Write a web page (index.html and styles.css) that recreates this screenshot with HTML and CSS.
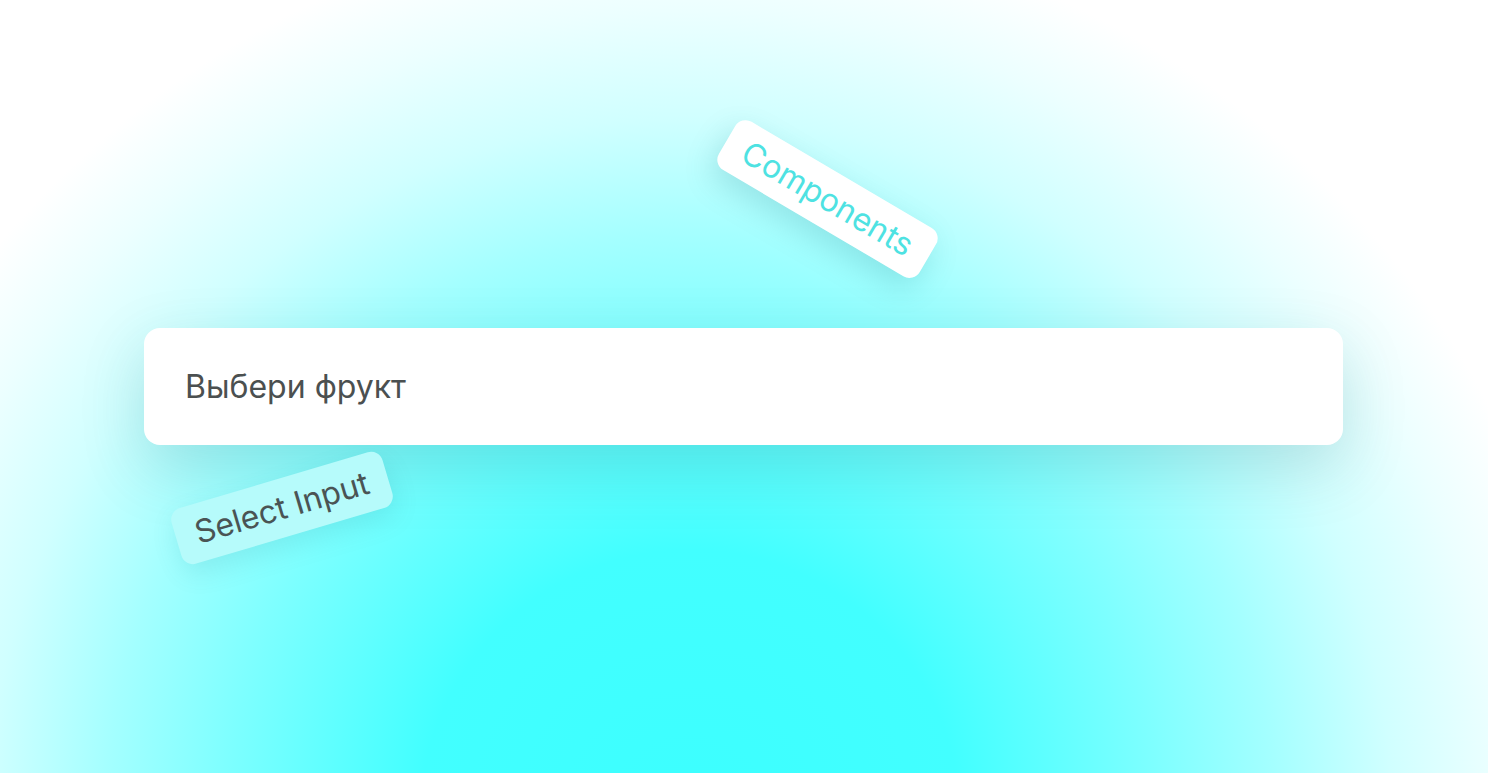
FILE: index.html
```html
<!DOCTYPE html>
<html lang="ru">
<head>
<meta charset="utf-8">
<title>Select Input</title>
<link rel="stylesheet" href="styles.css">
</head>
<body>
<main class="stage">
  <div class="select-field">
    <span class="select-placeholder">Выбери фрукт</span>
  </div>
  <span class="tag tag-components">Components</span>
  <span class="tag tag-select">Select Input</span>
</main>
</body>
</html>
```

FILE: styles.css
```css
html, body {
  margin: 0;
  padding: 0;
  width: 1488px;
  height: 773px;
  overflow: hidden;
}
body {
  font-family: "Inter", "Noto Sans", sans-serif;
  background: #ffffff;
}
.stage {
  position: relative;
  width: 1488px;
  height: 773px;
  box-sizing: border-box;
  padding: 328px 145px 0 144px;
  background:
    radial-gradient(ellipse 900px 900px at 690px 820px,
      #3cffff 0%,
      #42ffff 30%,
      #7effff 52%,
      #a4ffff 65%,
      #d0ffff 78%,
      #ecffff 90%,
      #ffffff 100%);
}
.select-field {
  height: 117px;
  background: #ffffff;
  border-radius: 16px;
  box-shadow: 0 22px 64px rgba(0, 90, 100, 0.18);
  display: flex;
  align-items: center;
  padding: 0 41px;
}
.select-placeholder {
  font-size: 32px;
  color: #4b5050;
}
.tag {
  position: absolute;
  font-size: 32px;
  line-height: 32px;
  border-radius: 12px;
  white-space: nowrap;
}
.tag-components {
  left: 711px;
  top: 171px;
  padding: 12px 20px;
  background: #ffffff;
  color: #4ee2e2;
  transform: rotate(30.5deg);
  box-shadow: 0 12px 30px rgba(0, 110, 120, 0.18);
}
.tag-select {
  left: 172px;
  top: 479px;
  padding: 13px 20px;
  background: #b6fbfb;
  color: #4a5454;
  transform: rotate(-16.5deg);
  box-shadow: 0 10px 26px rgba(0, 110, 120, 0.12);
}
```
